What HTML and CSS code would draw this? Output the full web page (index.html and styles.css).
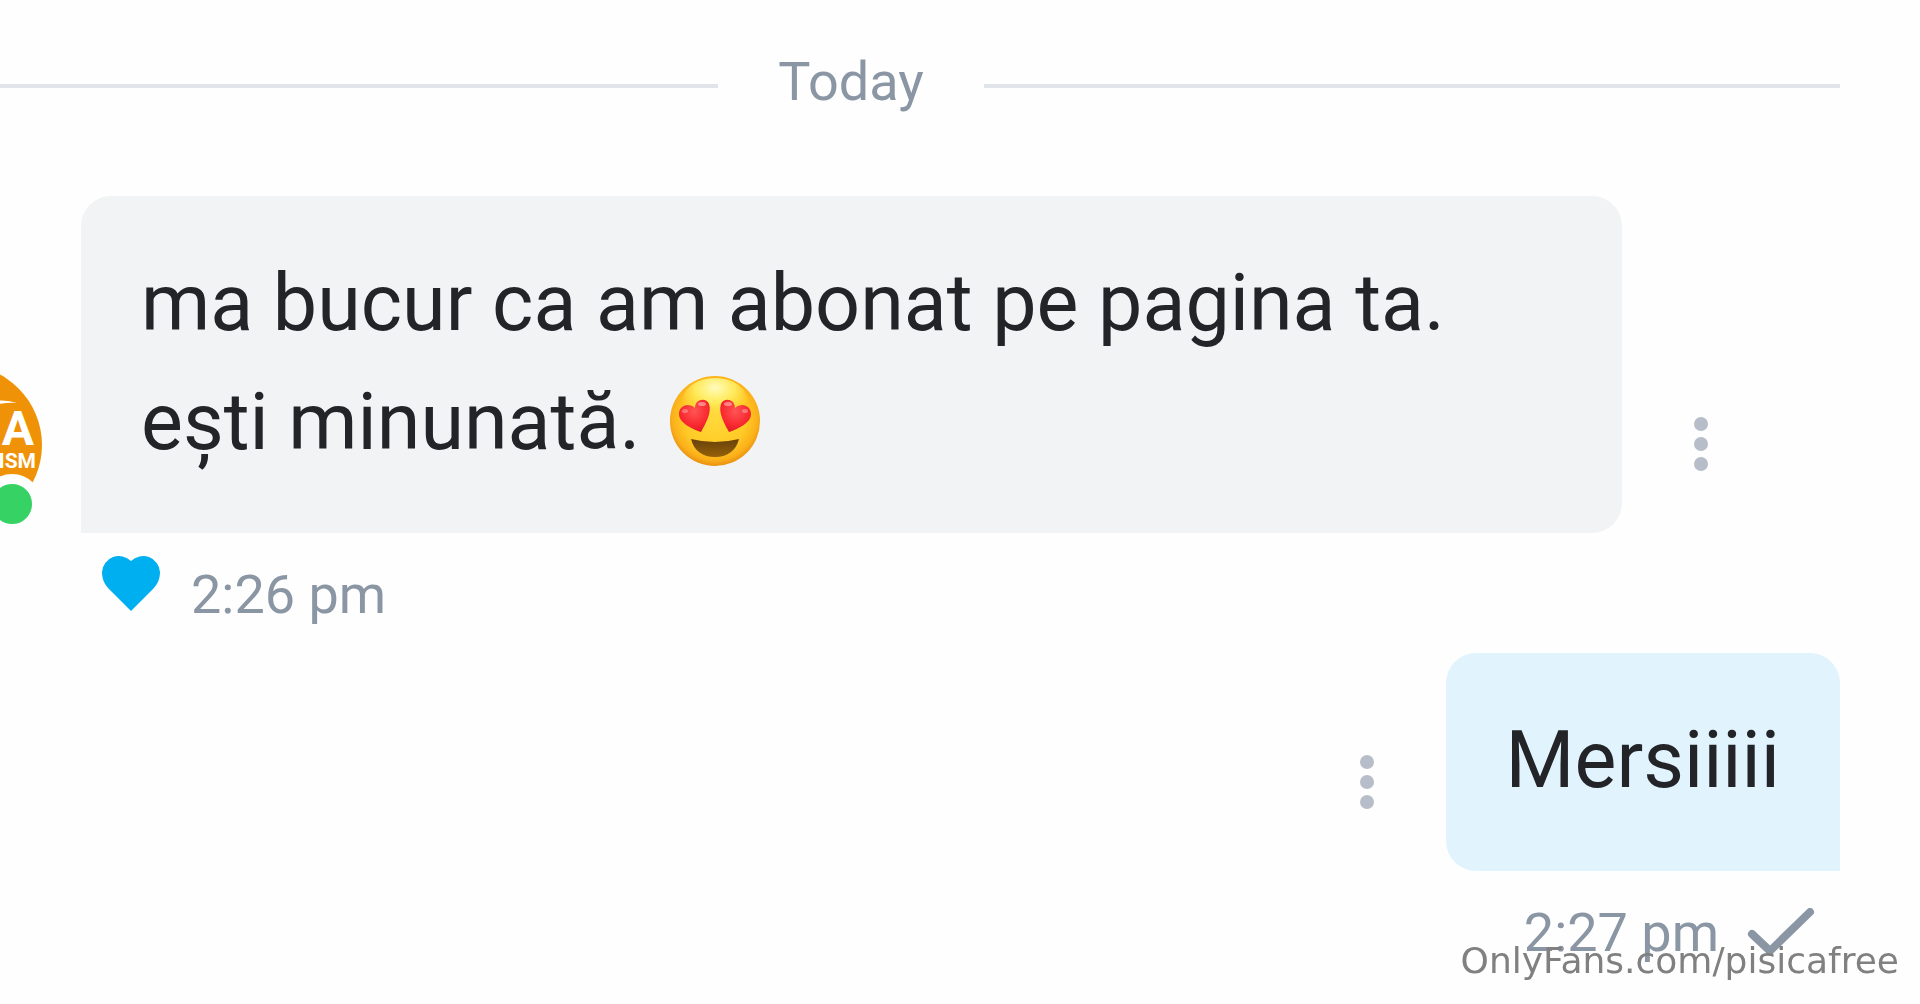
FILE: index.html
```
<!DOCTYPE html>
<html lang="ro">

<head>
    <meta charset="UTF-8">
    <meta name="viewport" content="width=device-width, initial-scale=1.0">
    <title>Chat</title>
    <link rel="stylesheet" href="styles.css">
</head>

<body>
    <main class="chat">
        <div class="divider"><span>Today</span></div>

        <article class="message received">
            <div class="message-row">
                <div class="avatar">
                    <svg class="avatar-picture" viewBox="0 0 160 160" aria-hidden="true">
                        <circle cx="80" cy="80" r="80" fill="#f09207" />
                        <path d="M100 38 Q122 33 135 38 Q122 37 100 42 Z" fill="#fff" />
                        <text class="avatar-name" x="152" y="80" text-anchor="end">A</text>
                        <text class="avatar-tagline" x="154" y="103" text-anchor="end">ISM</text>
                    </svg>
                    <span class="online"></span>
                </div>
                <p class="bubble">ma bucur ca am abonat pe pagina ta.<br>ești minunată.
                    <svg class="emoji" viewBox="0 0 90 90" role="img" aria-label="😍">
                        <defs>
                            <radialGradient id="face" cx="50%" cy="46%" r="54%">
                                <stop offset="0" stop-color="#ffd93b" />
                                <stop offset="0.65" stop-color="#ffca25" />
                                <stop offset="0.88" stop-color="#fbb019" />
                                <stop offset="1" stop-color="#e8900f" />
                            </radialGradient>
                            <radialGradient id="shine" cx="50%" cy="20%" r="60%">
                                <stop offset="0" stop-color="#fffcc0" />
                                <stop offset="0.5" stop-color="#fff36a" stop-opacity="0.8" />
                                <stop offset="1" stop-color="#ffe347" stop-opacity="0" />
                            </radialGradient>
                            <radialGradient id="eye" cx="50%" cy="35%" r="65%">
                                <stop offset="0" stop-color="#ff5555" />
                                <stop offset="0.7" stop-color="#f8282f" />
                                <stop offset="1" stop-color="#de1d25" />
                            </radialGradient>
                            <linearGradient id="mouth" x1="0" y1="0" x2="0" y2="1">
                                <stop offset="0" stop-color="#68400b" />
                                <stop offset="1" stop-color="#946109" />
                            </linearGradient>
                        </defs>
                        <circle cx="45" cy="45" r="45" fill="url(#face)" />
                        <ellipse cx="45" cy="26" rx="33" ry="24" fill="url(#shine)" />
                        <path d="M31 56 C22 53 9 47 9 38 C9 30 18 26 25 32 C25 23 36 21 39 28 C42 36 36 47 31 56 Z" fill="url(#eye)" />
                        <path d="M59 56 C68 53 81 47 81 38 C81 30 72 26 65 32 C65 23 54 21 51 28 C48 36 54 47 59 56 Z" fill="url(#eye)" />
                        <ellipse cx="32" cy="28" rx="4" ry="2" fill="#fff" opacity="0.4" />
                        <ellipse cx="58" cy="28" rx="4" ry="2" fill="#fff" opacity="0.4" />
                        <ellipse cx="15" cy="35" rx="3" ry="2" fill="#fff" opacity="0.3" />
                        <ellipse cx="75" cy="35" rx="3" ry="2" fill="#fff" opacity="0.3" />
                        <path d="M21 63 Q45 69 69 63 C66 75 57 81 45 81 C33 81 24 75 21 63 Z" fill="url(#mouth)" />
                    </svg>
                </p>
                <button class="menu" type="button" aria-label="Message options">
                    <svg viewBox="0 0 80 80">
                        <circle cx="40" cy="20" r="7" />
                        <circle cx="40" cy="40" r="7" />
                        <circle cx="40" cy="60" r="7" />
                    </svg>
                </button>
            </div>
            <div class="meta">
                <button class="like" type="button" aria-label="Like">
                    <svg viewBox="0 0 60 60">
                        <path d="M30 58 L8 36 C3 31 1 25 1 19 A17 17 0 0 1 30 8 A17 17 0 0 1 59 19 C59 25 57 31 52 36 Z" />
                    </svg>
                </button>
                <time datetime="14:26">2:26 pm</time>
            </div>
        </article>

        <article class="message sent">
            <div class="message-row">
                <button class="menu" type="button" aria-label="Message options">
                    <svg viewBox="0 0 80 80">
                        <circle cx="40" cy="20" r="7" />
                        <circle cx="40" cy="40" r="7" />
                        <circle cx="40" cy="60" r="7" />
                    </svg>
                </button>
                <p class="bubble">Mersiiiii</p>
            </div>
            <div class="meta">
                <time datetime="14:27">2:27 pm</time>
                <svg class="check" viewBox="0 0 68 50" role="img" aria-label="Sent">
                    <path d="M5 26 L23 43 L63 4" />
                </svg>
            </div>
        </article>
    </main>

    <a href="#" class="watermark">OnlyFans.com/pisicafree</a>
</body>

</html>
```
FILE: styles.css
```
* {
    box-sizing: border-box;
}

body {
    margin: 0;
    font-family: Roboto, sans-serif;
    background-color: #fefefe;
    color: #222428;
    overflow-x: hidden;
}

button {
    padding: 0;
    border: none;
    background: transparent;
    cursor: pointer;
}

.chat {
    padding: 50px 80px 0 0;
    overflow: hidden;
}

.divider {
    display: flex;
    align-items: center;
    gap: 60px;
    margin-bottom: 82px;
    font-size: 54px;
    line-height: 64px;
    color: #8a96a3;
}

.divider::before,
.divider::after {
    content: "";
    flex: 1;
    height: 4px;
    margin-top: 8px;
    background-color: #e2e4ec;
}

/* the left part of the divider starts off screen */
.divider::before {
    margin-left: -138px;
}

.message {
    margin-bottom: 26px;
}

.message-row {
    display: flex;
    align-items: flex-end;
    gap: 39px;
}

.received .message-row {
    padding-right: 99px;
}

.sent .message-row {
    justify-content: flex-end;
}

.bubble {
    margin: 0;
    padding: 48px 60px 51px;
    border-radius: 30px;
    font-size: 79px;
    line-height: 119px;
}

.received .bubble {
    flex: 1;
    background-color: #f1f3f5;
    border-bottom-left-radius: 0;
}

.sent .bubble {
    background-color: #e1f4fe;
    border-bottom-right-radius: 0;
}

.emoji {
    width: 90px;
    height: 90px;
    margin-left: 10px;
    vertical-align: -17px;
}

/* avatar */

.avatar {
    position: relative;
    flex: none;
    width: 160px;
    height: 160px;
    margin-left: -118px;
    margin-bottom: 8px;
}

.avatar-picture {
    display: block;
    width: 100%;
    height: 100%;
}

.avatar-name,
.avatar-tagline {
    fill: #fff;
    font-weight: bold;
}

.avatar-name {
    font-size: 48px;
}

.avatar-tagline {
    font-size: 21px;
}

.online {
    position: absolute;
    right: 0;
    bottom: -9px;
    width: 60px;
    height: 60px;
    border: 10px solid #fefefe;
    border-radius: 50%;
    background-color: #36d264;
}

.menu {
    flex: none;
    width: 80px;
    height: 80px;
    margin-bottom: 49px;
}

.menu svg {
    display: block;
    fill: #b7bdc9;
}

/* time and status */

.meta {
    display: flex;
    font-size: 54px;
    line-height: 64px;
    color: #8a96a3;
}

.received .meta {
    align-items: baseline;
    gap: 30px;
    margin-top: 20px;
    padding-left: 101px;
}

.sent .meta {
    align-items: center;
    justify-content: flex-end;
    gap: 28px;
    margin-top: 30px;
    padding-right: 25px;
}

.like svg {
    width: 60px;
    height: 60px;
    fill: #00aff0;
}

.check {
    width: 68px;
    height: 50px;
    fill: none;
    stroke: #8a96a3;
    stroke-width: 8;
    stroke-linecap: round;
    stroke-linejoin: round;
}

.watermark {
    position: fixed;
    right: 21px;
    bottom: 21px;
    font-family: "DejaVu Sans", sans-serif;
    font-size: 36px;
    line-height: 44px;
    color: #808080;
    text-decoration: none;
}
```
